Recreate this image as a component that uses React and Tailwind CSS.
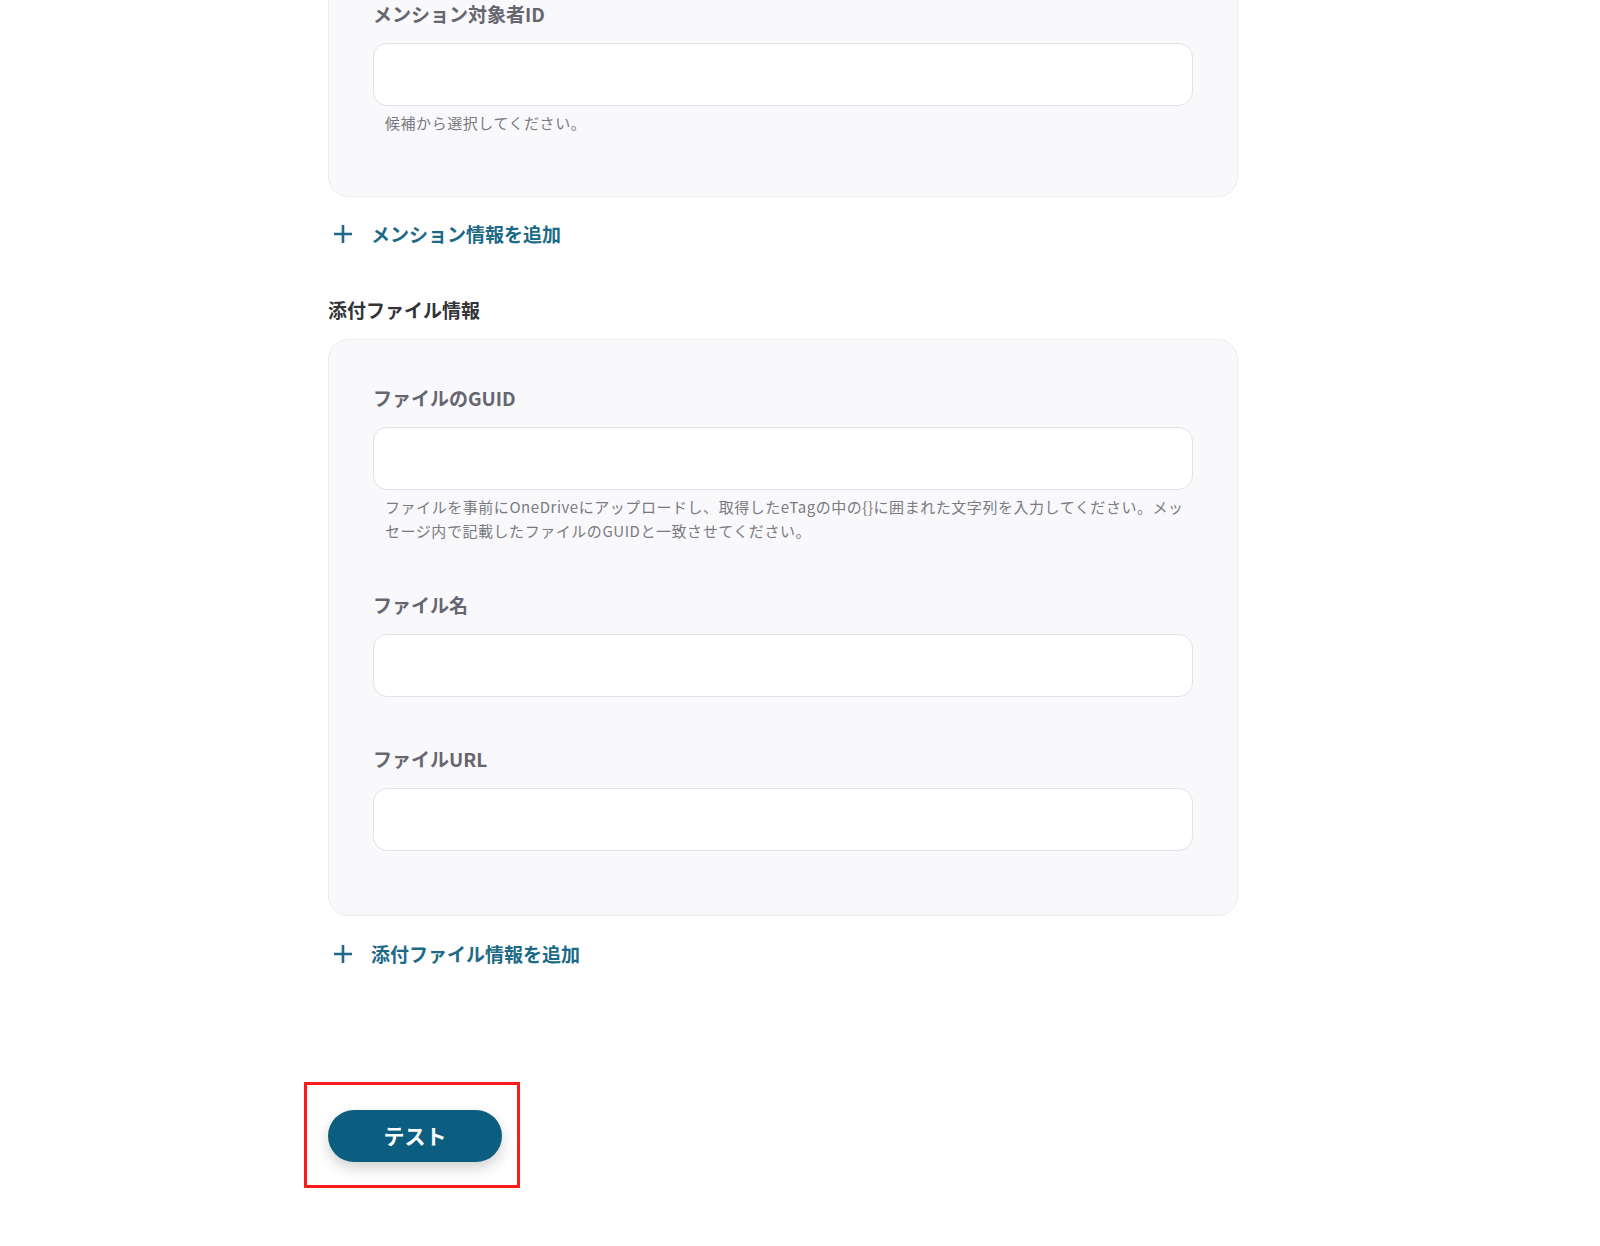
import React from "react";

const FONT = { fontFamily: '"Noto Sans CJK JP", "Noto Sans", sans-serif' };

function Field({ label, help }) {
  return (
    <div>
      <div className="text-[19px] font-bold leading-[28px] text-[#666670]">{label}</div>
      <div className="mt-[15px] h-[63px] rounded-[14px] border border-[#e2e2e8] bg-white"></div>
      {help && (
        <p className="mt-[5px] pl-3 pr-1 text-[15px] leading-[24px] tracking-[0.55px] text-[#7a7a80]">{help}</p>
      )}
    </div>
  );
}

function AddLink({ children }) {
  return (
    <button className="flex items-center gap-[18px] pl-[5px] text-[19px] font-bold leading-[28px] text-[#1c6a87]">
      <svg width="20" height="20" viewBox="0 0 20 20" fill="none" stroke="currentColor" strokeWidth="2.6">
        <path d="M10 1v18M1 10h18" />
      </svg>
      {children}
    </button>
  );
}

export default function App() {
  return (
    <div className="min-h-[1246px] overflow-hidden bg-white" style={FONT}>
      <div className="ml-[328px] w-[910px]">
        <div className="-mt-[45px] rounded-[20px] border border-[#ececf1] bg-[#f9f8fb] px-11 pt-11 pb-[61px]">
          <Field label="メンション対象者ID" help="候補から選択してください。" />
        </div>

        <div className="mt-[23px]">
          <AddLink>メンション情報を追加</AddLink>
        </div>

        <h3 className="mt-12 text-[19px] font-bold leading-[28px] text-[#333338]">添付ファイル情報</h3>

        <div className="mt-[15px] flex flex-col gap-[48px] rounded-[20px] border border-[#ececf1] bg-[#f9f8fb] px-11 pt-11 pb-[64px]">
          <Field
            label="ファイルのGUID"
            help="ファイルを事前にOneDriveにアップロードし、取得したeTagの中の{}に囲まれた文字列を入力してください。メッセージ内で記載したファイルのGUIDと一致させてください。"
          />
          <Field label="ファイル名" />
          <Field label="ファイルURL" />
        </div>

        <div className="mt-6">
          <AddLink>添付ファイル情報を追加</AddLink>
        </div>

        <div className="mt-[114px] -ml-6 inline-block border-[3px] border-[#ff1a1a] pt-[25px] pl-[21px] pr-[15px] pb-[23px]">
          <button className="h-[52px] w-[174px] rounded-full bg-[#0b5e80] text-[21px] font-bold text-white shadow-[0_6px_14px_rgba(0,0,0,0.18)]">
            テスト
          </button>
        </div>
      </div>
    </div>
  );
}
